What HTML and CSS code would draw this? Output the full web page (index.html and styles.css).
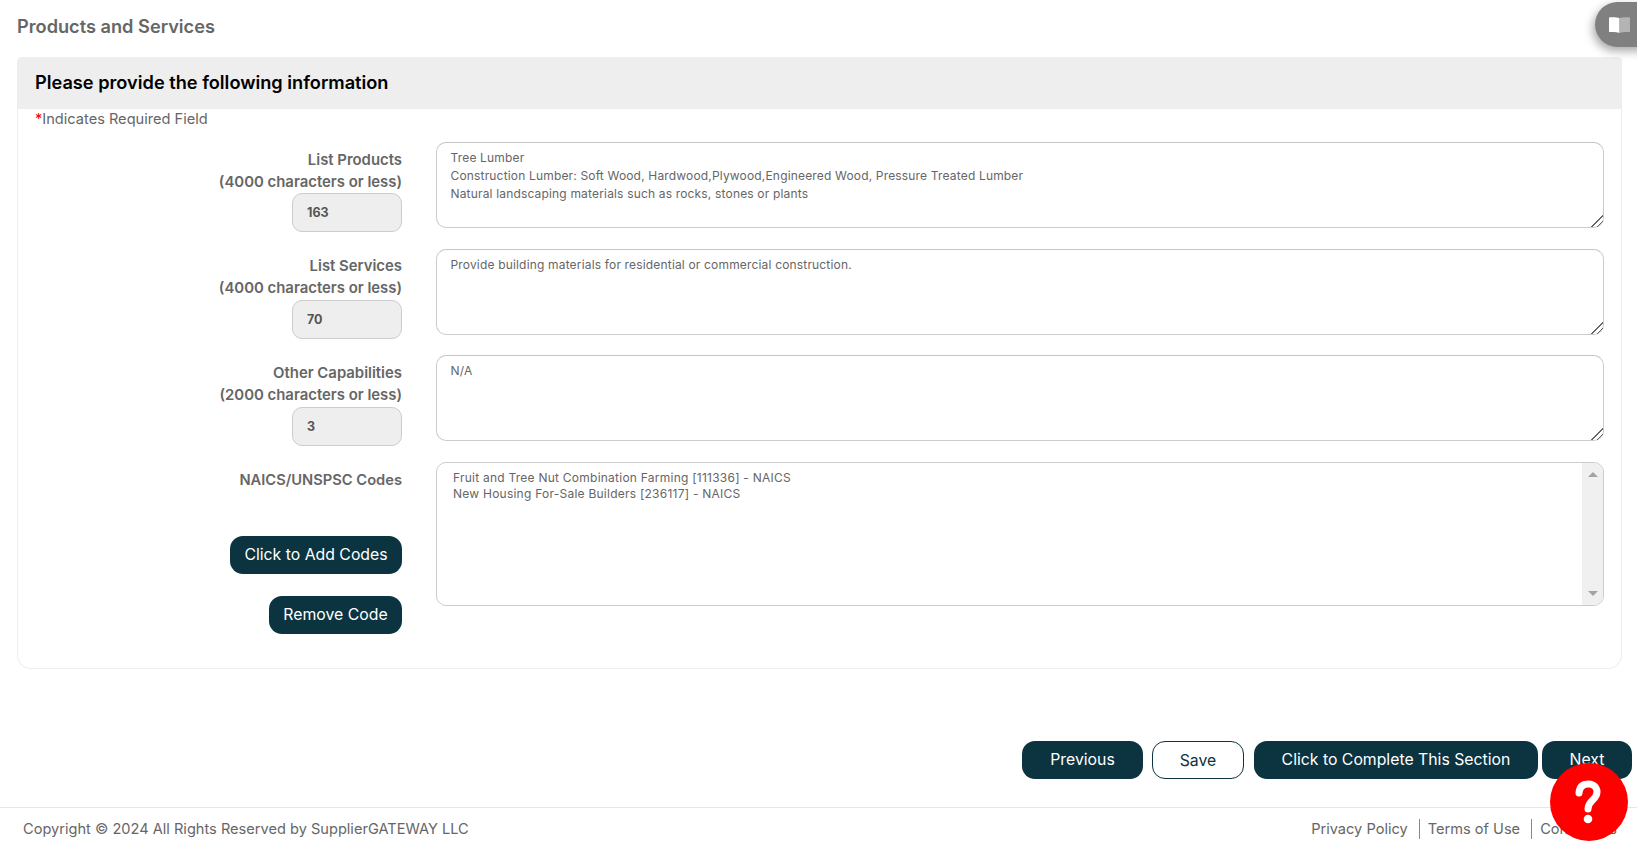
FILE: index.html
```html
<!DOCTYPE html>
<html lang="en">
<head>
<meta charset="utf-8">
<title>Products and Services</title>
<link rel="stylesheet" href="styles.css">
</head>
<body>
<main class="page">
  <h1 class="page-title">Products and Services</h1>
  <section class="card">
    <h2 class="card-head">Please provide the following information</h2>
    <p class="req"><span class="star">*</span>Indicates Required Field</p>
    <div class="form">
      <div class="row">
        <div class="side">
          <label class="lbl">List Products<br>(4000 characters or less)</label>
          <div class="count">163</div>
        </div>
        <textarea class="area">Tree Lumber
Construction Lumber: Soft Wood, Hardwood,Plywood,Engineered Wood, Pressure Treated Lumber
Natural landscaping materials such as rocks, stones or plants</textarea>
      </div>
      <div class="row">
        <div class="side">
          <label class="lbl">List Services<br>(4000 characters or less)</label>
          <div class="count">70</div>
        </div>
        <textarea class="area">Provide building materials for residential or commercial construction.</textarea>
      </div>
      <div class="row row-other">
        <div class="side">
          <label class="lbl">Other Capabilities<br>(2000 characters or less)</label>
          <div class="count">3</div>
        </div>
        <textarea class="area">N/A</textarea>
      </div>
      <div class="row row-codes">
        <div class="side">
          <label class="lbl lbl-codes">NAICS/UNSPSC Codes</label>
          <button class="btn btn-add" type="button">Click to Add Codes</button>
          <button class="btn btn-remove" type="button">Remove Code</button>
        </div>
        <div class="listbox">
          <div class="options">
            <div>Fruit and Tree Nut Combination Farming [111336] - NAICS</div>
            <div>New Housing For-Sale Builders [236117] - NAICS</div>
          </div>
          <div class="scroll"><span class="arrow-up"></span><span class="arrow-down"></span></div>
        </div>
      </div>
    </div>
  </section>
  <div class="actions">
    <button class="btn btn-prev" type="button">Previous</button>
    <button class="btn btn-save" type="button">Save</button>
    <button class="btn btn-complete" type="button">Click to Complete This Section</button>
    <button class="btn btn-next" type="button">Next</button>
  </div>
  <footer class="foot">
    <span>Copyright © 2024 All Rights Reserved by SupplierGATEWAY LLC</span>
    <nav class="links">
      <a>Privacy Policy</a>
      <a class="sep">Terms of Use</a>
      <a class="sep">Contact Us</a>
    </nav>
  </footer>
</main>
<div class="book">
  <svg class="book-icon" viewBox="0 0 21 16" width="21" height="16" aria-hidden="true">
    <path fill="#fff" d="M10.500 1C8 .2 4 0 .5.3L0 1v13.600l.5.4c4-.2 7.500 0 10 1z"/>
    <path fill="#b4b4b4" d="M10.500 1C13 .2 17 0 20.500.3l.5.7v13.600l-.5.4c-4-.2-7.500 0-10 1z"/>
  </svg>
</div>
<div class="help" role="img" aria-label="Help">
  <svg class="help-icon" viewBox="0 0 78 78" width="78" height="78" aria-hidden="true">
    <path fill="none" stroke="#fff" stroke-width="7" stroke-linecap="round" d="M29 30C29.500 23 33.500 21 38.500 21C44 21 47 25 47 29C47 37 38 37 38 46"/>
    <circle cx="38" cy="56" r="4.300" fill="#fff"/>
  </svg>
</div>
</body>
</html>
```
FILE: styles.css
```css
* { box-sizing: border-box; }
html, body { margin: 0; padding: 0; }
body {
  height: 847px;
  overflow: hidden;
  background: #fff;
  font-family: Inter, "Liberation Sans", sans-serif;
  color: #666;
}
.page { display: flex; flex-direction: column; }
.page-title {
  margin: 0;
  padding: 15px 0 0 17px;
  height: 57px;
  font-size: 18.200px;
  line-height: 22px;
  font-weight: 600;
  color: #666;
}
.card {
  margin-left: 17px;
  width: 1605px;
  height: 612px;
  border: 1px solid #eee;
  border-top: 0;
  border-radius: 5px 5px 14px 14px;
}
.card-head {
  margin: 0 -1px;
  height: 52px;
  padding: 0 0 0 18px;
  background: #eee;
  border-radius: 5px 5px 0 0;
  font-size: 18.200px;
  line-height: 50px;
  font-weight: 600;
  color: #000;
}
.req {
  margin: 0;
  padding: 1px 0 0 17px;
  height: 33px;
  font-size: 14.600px;
  line-height: 19px;
  color: #666;
}
.star { color: #f00; }
.form { display: flex; flex-direction: column; }
.row {
  display: flex;
  gap: 34px;
  height: 107px;
}
.row + .row { height: 106px; }
.row + .row.row-other { height: 107px; }
.row + .row.row-codes { height: auto; }
.side {
  width: 384px;
  display: flex;
  flex-direction: column;
  align-items: flex-end;
  flex: none;
}
.lbl {
  display: block;
  padding-top: 7px;
  font-size: 14.900px;
  line-height: 22px;
  font-weight: 600;
  text-align: right;
  color: #666;
}
.row + .row .lbl { padding-top: 6px; }
.row + .row-other .lbl { padding-top: 7px; }
.count {
  width: 110px;
  height: 39px;
  padding-left: 14px;
  background: #eee;
  border: 1px solid #ccc;
  border-radius: 10px;
  font-size: 12.500px;
  line-height: 37px;
  font-weight: 700;
  color: #555;
}
.row + .row .count { margin-top: 1px; }
.area {
  display: block;
  width: 1168px;
  height: 86px;
  padding: 6px 13.500px;
  border: 1px solid #ccc;
  border-top-color: #c4c4c4;
  border-radius: 10px;
  background: #fff;
  font-family: Inter, "Liberation Sans", sans-serif;
  font-size: 12px;
  line-height: 18px;
  letter-spacing: .17px;
  color: #666;
  resize: vertical;
  outline: 0;
}
.area::-webkit-resizer {
  background: linear-gradient(135deg, transparent 58%, #666 58% 64%, transparent 64% 77%, #666 77% 83%, transparent 83%);
}
.listbox {
  display: flex;
  width: 1168px;
  height: 144px;
  border: 1px solid #ccc;
  border-radius: 10px;
  overflow: hidden;
  background: #fff;
}
.options {
  flex: 1;
  padding: 7px 16px;
  font-size: 12px;
  line-height: 16px;
  letter-spacing: .24px;
  color: #666;
}
.scroll {
  width: 21px;
  background: #f0f0f0;
  display: flex;
  flex-direction: column;
  justify-content: space-between;
  align-items: center;
  padding: 9px 0;
}
.arrow-up, .arrow-down {
  display: block;
  width: 0;
  height: 0;
  border-left: 5px solid transparent;
  border-right: 5px solid transparent;
}
.arrow-up { border-bottom: 5px solid #a3a3a3; }
.arrow-down { border-top: 5px solid #a3a3a3; }
.btn {
  height: 38px;
  padding: 0;
  border: 0;
  border-radius: 13px;
  background: #0c3340;
  color: #fff;
  font-family: Inter, "Liberation Sans", sans-serif;
  font-size: 15.800px;
  line-height: 38px;
}
.lbl-codes { height: 74px; font-size: 14.700px; }
.row + .row .lbl-codes { padding-top: 7px; }
.btn-add { width: 172px; }
.btn-remove { width: 133px; margin-top: 22px; }
.actions {
  display: flex;
  justify-content: flex-end;
  margin-top: 72px;
  padding-right: 5px;
}
.btn-prev { width: 121px; }
.btn-save {
  width: 92px;
  margin-left: 9px;
  background: #fff;
  color: #0c3340;
  border: 1px solid #0c3340;
}
.btn-complete { width: 284px; margin-left: 10px; }
.btn-next { width: 90px; margin-left: 4px; }
.foot {
  margin-top: 28px;
  height: 40px;
  border-top: 1px solid #e6e6e6;
  display: flex;
  justify-content: space-between;
  align-items: flex-start;
  padding: 11px 20px 0 23px;
  font-size: 14.600px;
  line-height: 20px;
  color: #666;
}
.links { display: flex; height: 20px; }
.sep {
  margin-left: 11px;
  padding-left: 8px;
  border-left: 1px solid #888;
}
.book {
  position: fixed;
  left: 1595px;
  top: 2px;
  width: 70px;
  height: 45px;
  border-radius: 23px;
  background: #808080;
  box-shadow: -2px 4px 10px rgba(0,0,0,.35);
}
.book-icon { position: absolute; left: 14px; top: 15px; }
.help {
  position: fixed;
  left: 1550px;
  top: 763px;
  width: 78px;
  height: 78px;
  border-radius: 50%;
  background: #f00;
}
.help-icon { display: block; }
```
